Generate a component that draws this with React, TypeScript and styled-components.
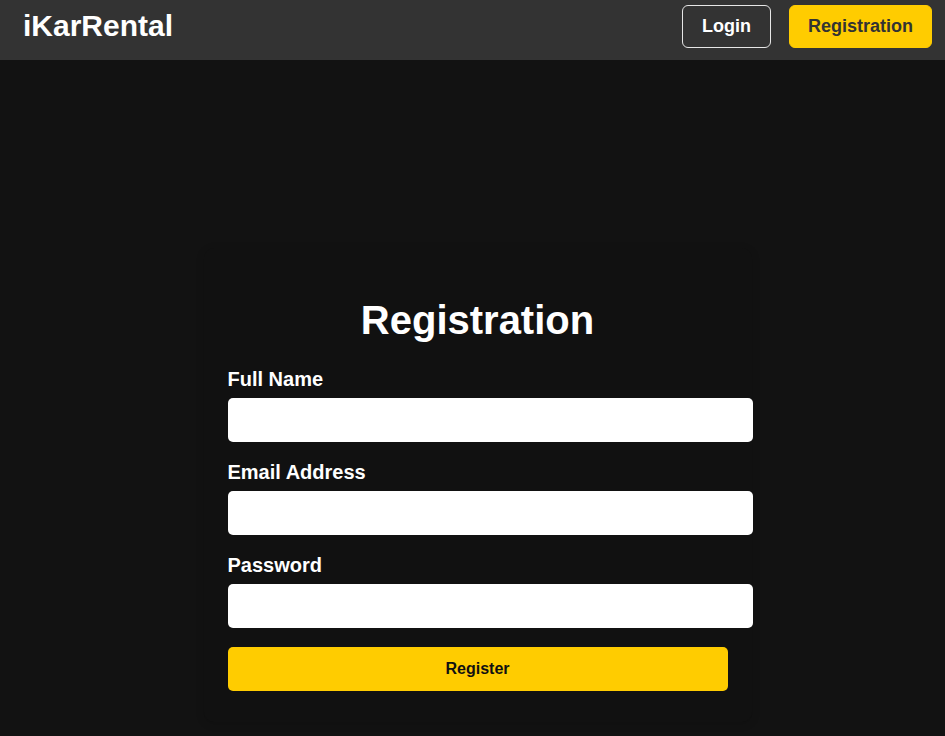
import React from "react";
import styled, { createGlobalStyle } from "styled-components";

const GlobalStyle = createGlobalStyle`
  html, body {
    margin: 0;
    padding: 0;
    background: #121212;
    font-family: "Liberation Sans", Arial, sans-serif;
    color: #ffffff;
  }
  * { box-sizing: border-box; }
`;

const Page = styled.div`
  min-height: 736px;
  background: #121212;
  display: flex;
  flex-direction: column;
`;

const Header = styled.header`
  height: 60px;
  background: #333333;
  display: flex;
  align-items: flex-start;
  justify-content: space-between;
  padding: 5px 13px 0 23px;
`;

const Logo = styled.div`
  margin-top: 4px;
  font-size: 30px;
  font-weight: 700;
  color: #ffffff;
  line-height: normal;
`;

const Nav = styled.nav`
  display: flex;
  gap: 18px;
`;

const NavButton = styled.button<{ $primary?: boolean }>`
  font-family: "Liberation Sans", Arial, sans-serif;
  font-size: 18px;
  font-weight: 700;
  line-height: normal;
  padding: 10px ${(p) => (p.$primary ? "18px" : "19px")};
  border-radius: 6px;
  border: 1px solid ${(p) => (p.$primary ? "#ffcc00" : "#e6e6e6")};
  background: ${(p) => (p.$primary ? "#ffcc00" : "transparent")};
  color: ${(p) => (p.$primary ? "#333333" : "#ffffff")};
  cursor: pointer;
`;

const Main = styled.main`
  flex: 1;
  display: flex;
  justify-content: center;
  align-items: flex-start;
  padding: 188px 0 0 10px;
`;

const Card = styled.div`
  width: 548px;
  background: #111111;
  border-radius: 10px;
  box-shadow: 0 2px 8px rgba(0, 0, 0, 0.15);
  padding: 24px 24px 31px;
`;

const Title = styled.h2`
  margin: 26px 0 25px;
  font-size: 40px;
  font-weight: 700;
  line-height: normal;
  text-align: center;
  color: #ffffff;
`;

const Form = styled.form`
  display: flex;
  flex-direction: column;
  align-items: flex-start;
`;

const Label = styled.label`
  display: block;
  font-size: 20px;
  font-weight: 700;
  line-height: 23px;
  margin-bottom: 7px;
  color: #ffffff;
`;

const Input = styled.input`
  display: block;
  width: 525px;
  height: 44px;
  padding: 0 12px;
  border: none;
  border-radius: 5px;
  background: #ffffff;
  font-family: "Liberation Sans", Arial, sans-serif;
  font-size: 16px;
  margin: 0 0 19px;
  outline: none;
`;

const SubmitButton = styled.button`
  width: 500px;
  height: 44px;
  border: none;
  border-radius: 5px;
  background: #ffcc00;
  color: #111111;
  font-family: "Liberation Sans", Arial, sans-serif;
  font-size: 16px;
  font-weight: 700;
  cursor: pointer;
`;

export default function App() {
  return (
    <Page>
      <GlobalStyle />
      <Header>
        <Logo>iKarRental</Logo>
        <Nav>
          <NavButton>Login</NavButton>
          <NavButton $primary>Registration</NavButton>
        </Nav>
      </Header>
      <Main>
        <Card>
          <Title>Registration</Title>
          <Form onSubmit={(e) => e.preventDefault()}>
            <Label htmlFor="name">Full Name</Label>
            <Input id="name" type="text" />
            <Label htmlFor="email">Email Address</Label>
            <Input id="email" type="email" />
            <Label htmlFor="password">Password</Label>
            <Input id="password" type="password" />
            <SubmitButton type="submit">Register</SubmitButton>
          </Form>
        </Card>
      </Main>
    </Page>
  );
}
